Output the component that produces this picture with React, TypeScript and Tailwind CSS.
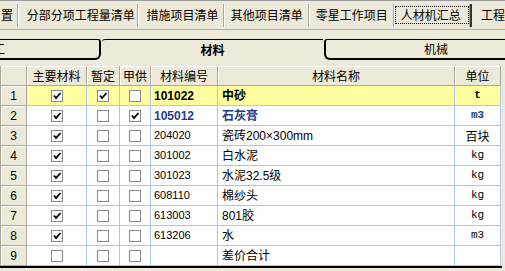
import React from "react";

const cjk = '"Noto Sans CJK SC", sans-serif';
const latin = '"Liberation Sans", "Noto Sans CJK SC", sans-serif';

interface Row {
  main: boolean;
  temp: boolean;
  supply: boolean;
  code: string;
  name: string;
  unit: string;
}

const rows: Row[] = [
  { main: true, temp: true, supply: false, code: "101022", name: "中砂", unit: "t" },
  { main: true, temp: false, supply: true, code: "105012", name: "石灰膏", unit: "m3" },
  { main: true, temp: false, supply: false, code: "204020", name: "瓷砖200×300mm", unit: "百块" },
  { main: true, temp: false, supply: false, code: "301002", name: "白水泥", unit: "kg" },
  { main: true, temp: false, supply: false, code: "301023", name: "水泥32.5级", unit: "kg" },
  { main: true, temp: false, supply: false, code: "608110", name: "棉纱头", unit: "kg" },
  { main: true, temp: false, supply: false, code: "613003", name: "801胶", unit: "kg" },
  { main: true, temp: false, supply: false, code: "613206", name: "水", unit: "m3" },
  { main: false, temp: false, supply: false, code: "", name: "差价合计", unit: "" },
];

const topTabs = [
  { label: "分部分项工程量清单", w: "w-[119px]", pl: "pl-[8px]" },
  { label: "措施项目清单", w: "w-[85px]", pl: "pl-[8px]" },
  { label: "其他项目清单", w: "w-[84px]", pl: "pl-[6px]" },
  { label: "零星工作项目", w: "w-[84px]", pl: "pl-[6px]" },
];

function Sep() {
  return (
    <div className="flex h-[23px] self-center">
      <div className="w-px bg-[#ACA899]" />
      <div className="w-px bg-white" />
    </div>
  );
}

function Check({ on }: { on: boolean }) {
  return (
    <div className="w-[12px] h-[12px] border border-[#8A8A8A] bg-white flex items-center justify-center">
      {on && (
        <svg width="10" height="10" viewBox="0 0 10 10">
          <path d="M2 4.5 L4 7 L8.5 2" fill="none" stroke="#000" strokeWidth="1.8" />
        </svg>
      )}
    </div>
  );
}

const cell = "border-r border-b border-[#A9C8E8] flex items-center";
const head =
  "bg-[#ECE9D8] border-r border-b border-[#ACA899] shadow-[inset_1px_1px_0_#fff] flex items-center justify-center text-[12px]";

export default function App() {
  return (
    <div
      className="w-[505px] h-[271px] overflow-hidden bg-[#ECE9D8] text-black"
      style={{ fontFamily: cjk }}
    >
      {/* top tab strip */}
      <div className="h-[29px] border-t border-[#9A9A9A] flex items-center text-[12px] whitespace-nowrap">
        <div className="w-[17px] pl-[1px]">置</div>
        <Sep />
        {topTabs.map((t) => (
          <React.Fragment key={t.label}>
            <div className={`${t.w} ${t.pl}`}>{t.label}</div>
            <Sep />
          </React.Fragment>
        ))}
        <div className="w-[75px] h-full flex items-center">
          <div className="ml-[0px] w-[74px] h-[18px] border border-dotted border-black flex items-center pl-[5px]">
            人材机汇总
          </div>
        </div>
        <div className="flex h-[23px] self-center">
          <div className="w-px bg-[#ACA899]" />
          <div className="w-[2px] bg-[#333]" />
        </div>
        <div className="pl-[9px]">工程</div>
      </div>
      <div className="h-px bg-[#9DB1CC]" />

      {/* material / machine tabs */}
      <div className="mt-[9px] h-[21px] flex text-[12px] whitespace-nowrap">
        <div className="w-[101px] border-t border-r-2 border-b-2 border-black rounded-tr-[3px] rounded-br-[6px] overflow-hidden flex items-center">
          <span className="ml-[-7px]">工</span>
        </div>
        <div className="w-[221px] ml-[1px] border-t border-black rounded-tl-[3px] flex items-center justify-center font-bold">
          材料
        </div>
        <div className="flex-1 ml-[1px] border-t border-l-2 border-b-2 border-black rounded-tl-[3px] rounded-bl-[6px] flex items-center pl-[98px]">
          机械
        </div>
      </div>

      {/* grid */}
      <div className="mt-[6px] w-[502px] border-l border-[#ACA899] grid grid-cols-[26px_60px_33px_31px_67px_237px_46px]">
        <div className={`${head} h-[20px]`} />
        <div className={`${head} h-[20px]`}>主要材料</div>
        <div className={`${head} h-[20px]`}>暂定</div>
        <div className={`${head} h-[20px]`}>甲供</div>
        <div className={`${head} h-[20px]`}>材料编号</div>
        <div className={`${head} h-[20px]`}>材料名称</div>
        <div className={`${head} h-[20px]`}>单位</div>

        {rows.map((r, i) => {
          const bg = i === 0 ? "bg-[#FFFF9F]" : "bg-white";
          const emph =
            i === 0 ? "font-bold text-black" : i === 1 ? "font-bold text-[#1F3C8C]" : "";
          return (
            <React.Fragment key={i}>
              <div className={`${head} h-[20px]`} style={{ fontFamily: latin }}>
                {i + 1}
              </div>
              <div className={`${cell} ${bg} justify-center`}>
                <Check on={r.main} />
              </div>
              <div className={`${cell} ${bg} justify-center`}>
                <Check on={r.temp} />
              </div>
              <div className={`${cell} ${bg} justify-center`}>
                <Check on={r.supply} />
              </div>
              <div
                className={`${cell} ${bg} pl-[3px] ${emph ? "text-[12px] " + emph : "text-[11px]"}`}
                style={{ fontFamily: latin }}
              >
                {r.code}
              </div>
              <div
                className={`${cell} ${bg} pl-[4px] text-[12px] ${emph}`}
                style={{ fontFamily: latin }}
              >
                {r.name}
              </div>
              <div
                className={`${cell} ${bg} justify-center ${
                  r.unit === "百块" ? "text-[12px]" : "text-[11px]"
                } ${emph}`}
                style={{ fontFamily: r.unit === "百块" ? cjk : '"Liberation Mono", monospace' }}
              >
                {r.unit}
              </div>
            </React.Fragment>
          );
        })}
      </div>
      <div className="h-[2px] w-[502px] bg-black" />
    </div>
  );
}
